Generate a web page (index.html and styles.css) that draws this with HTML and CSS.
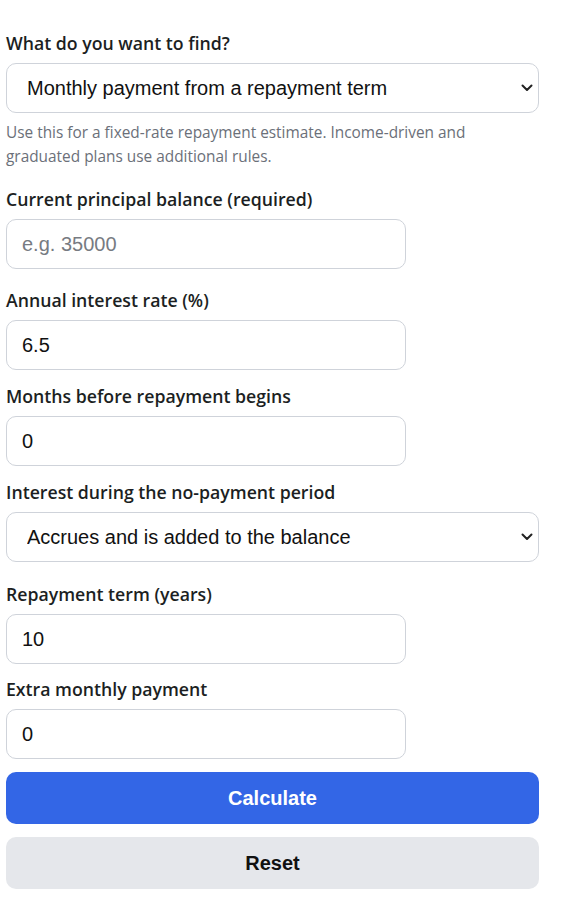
FILE: index.html
```html
<!DOCTYPE html>
<html lang="en">
<head>
<meta charset="utf-8">
<title>Loan repayment calculator</title>
<link rel="stylesheet" href="styles.css">
</head>
<body>
<form class="calc">
  <div class="field">
    <label class="label" for="mode">What do you want to find?</label>
    <div class="select-wrap">
      <select id="mode" class="control control--select">
        <option>Monthly payment from a repayment term</option>
      </select>
      <svg class="chevron" width="12" height="8" viewBox="0 0 12 8" aria-hidden="true"><path d="M1.5 1.5 L6 6 L10.5 1.5" fill="none" stroke="#222" stroke-width="2" stroke-linecap="round" stroke-linejoin="round"/></svg>
    </div>
    <p class="help">Use this for a fixed-rate repayment estimate. Income-driven and graduated plans use additional rules.</p>
  </div>

  <div class="field field--after-help">
    <label class="label" for="principal">Current principal balance (required)</label>
    <input id="principal" class="control control--short" type="text" placeholder="e.g. 35000">
  </div>

  <div class="field field--gap-19">
    <label class="label" for="rate">Annual interest rate (%)</label>
    <input id="rate" class="control control--short" type="text" value="6.5">
  </div>

  <div class="field">
    <label class="label" for="months">Months before repayment begins</label>
    <input id="months" class="control control--short" type="text" value="0">
  </div>

  <div class="field">
    <label class="label" for="accrual">Interest during the no-payment period</label>
    <div class="select-wrap">
      <select id="accrual" class="control control--select">
        <option>Accrues and is added to the balance</option>
      </select>
      <svg class="chevron" width="12" height="8" viewBox="0 0 12 8" aria-hidden="true"><path d="M1.5 1.5 L6 6 L10.5 1.5" fill="none" stroke="#222" stroke-width="2" stroke-linecap="round" stroke-linejoin="round"/></svg>
    </div>
  </div>

  <div class="field field--gap-20">
    <label class="label" for="term">Repayment term (years)</label>
    <input id="term" class="control control--short" type="text" value="10">
  </div>

  <div class="field field--gap-13">
    <label class="label" for="extra">Extra monthly payment</label>
    <input id="extra" class="control control--short" type="text" value="0">
  </div>

  <div class="actions">
    <button type="button" class="btn btn--primary">Calculate</button>
    <button type="reset" class="btn btn--secondary">Reset</button>
  </div>
</form>
</body>
</html>
```

FILE: styles.css
```css
* { box-sizing: border-box; }

html, body {
  margin: 0;
  padding: 0;
  background: #ffffff;
}

body {
  font-family: "Open Sans", "Noto Sans", "DejaVu Sans", sans-serif;
  color: #1f2328;
}

.calc {
  width: 533px;
  margin: 0 0 0 6px;
  padding: 31px 0 8px;
  display: flex;
  flex-direction: column;
}

.field {
  display: flex;
  flex-direction: column;
  margin-top: 14px;
}

.field:first-child { margin-top: 0; }
.field--after-help { margin-top: 18px; }
.field--gap-19 { margin-top: 19px; }
.field--gap-20 { margin-top: 20px; }
.field--gap-13 { margin-top: 13px; }

.label {
  font-size: 17.7px;
  font-weight: 600;
  line-height: 24px;
  margin-bottom: 8px;
  color: #1c1f23;
}

.control {
  height: 50px;
  border: 1px solid #cfd3da;
  border-radius: 10px;
  background: #ffffff;
  font-family: "Liberation Sans", Arial, sans-serif;
  font-size: 20px;
  color: #111111;
  padding: 0 15px;
  outline: none;
}

.control::placeholder { color: #777b82; }

.control--short { width: 400px; }

.select-wrap {
  position: relative;
  width: 533px;
}

.control--select {
  width: 100%;
  appearance: none;
  -webkit-appearance: none;
  padding: 0 40px 0 20px;
}

.chevron {
  position: absolute;
  right: 6px;
  top: 21px;
  pointer-events: none;
}

.help {
  margin: 8px 0 0;
  max-width: 515px;
  font-size: 15.4px;
  line-height: 24px;
  color: #6b7079;
}

.actions {
  display: flex;
  flex-direction: column;
  gap: 13px;
  margin-top: 13px;
}

.btn {
  height: 52px;
  border: 0;
  border-radius: 10px;
  font-family: "Liberation Sans", Arial, sans-serif;
  font-size: 20px;
  font-weight: 700;
  cursor: pointer;
}

.btn--primary {
  background: #3366e6;
  color: #ffffff;
}

.btn--secondary {
  background: #e5e7eb;
  color: #111111;
}
```
